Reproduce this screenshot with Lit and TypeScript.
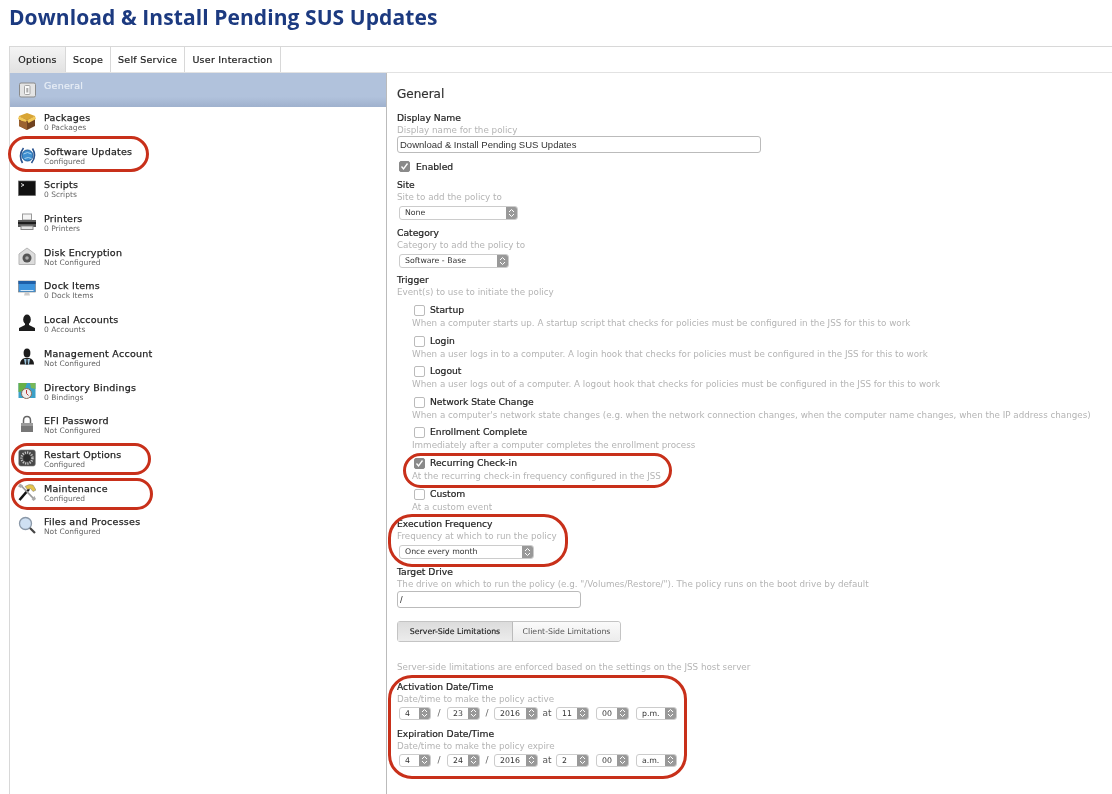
import {LitElement, css, html, svg} from 'lit';
import {customElement} from 'lit/decorators.js';
import {classMap} from 'lit/directives/class-map.js';

const Icons = {
  general: svg`<rect x="1.500" y="3" width="16" height="14" rx="1.500" fill="#e4e4e4" stroke="#8b8b8b"/><rect x="6.500" y="5.500" width="5.500" height="9" rx="1" fill="#fafafa" stroke="#a5a5a5"/><rect x="8.300" y="8" width="2" height="4.500" fill="#aaa"/>`,
  packages: svg`<path d="M9 7 L17 4 V14 L9 18 L1 14 V4Z" fill="#6f4220"/><path d="M1 4 L9 1 L17 4 L9 8Z" fill="#d9a534"/><path d="M1 4 L9 8 L7.500 11 L0 7Z M17 4 L9 8 L10.500 11 L18 7Z" fill="#f2c858"/><path d="M9 10 V18 L1 14 V8.500Z" fill="#9b6230"/>`,
  software: svg`<circle cx="9.500" cy="9.500" r="5.500" fill="#3f8fd0" stroke="#1d5c9a"/><path d="M5.500 8 Q9.500 5 13.500 8 M6.500 12.500 Q10.500 10.500 13.500 12.500" stroke="#a8d4f0" fill="none"/><path d="M5.500 2 Q0 9 4.500 17" fill="none" stroke="#28518c" stroke-width="1.600"/><path d="M13.500 17 Q19 10 14.500 2.500" fill="none" stroke="#28518c" stroke-width="1.600"/>`,
  scripts: svg`<rect x="0.500" y="2" width="17" height="14.500" fill="#111" stroke="#666" stroke-width=".7"/><path d="M3 4.500 L6 6 L3 7.500" fill="none" stroke="#ddd"/>`,
  printers: svg`<rect x="4.500" y="1" width="9" height="6" fill="#f4f4f4" stroke="#999"/><path d="M0 7 H18 V14 H0Z" fill="#5b5b5b"/><rect x="0" y="9" width="18" height="2" fill="#1e1e1e"/><rect x="3" y="13" width="12" height="3.500" fill="#e4e4e4" stroke="#888"/>`,
  disk: svg`<path d="M9 1 L17 7 V17.500 H1 V7Z" fill="#dcdcdc" stroke="#b5b5b5"/><circle cx="9" cy="11" r="4.500" fill="#555"/><circle cx="9" cy="11" r="1.800" fill="#aaa"/>`,
  dock: svg`<rect x="0.500" y="1" width="17" height="11" fill="#3d93dc" stroke="#777" stroke-width=".6"/><rect x="0.500" y="1" width="17" height="3" fill="#1e5fa8"/><rect x="2.500" y="10" width="13" height="1" fill="#d8eaf8"/><path d="M7 12 H11 L12 15.500 H6Z" fill="#ccc"/>`,
  local: svg`<ellipse cx="9" cy="5.500" rx="3.800" ry="5" fill="#1c1c1c"/><path d="M7 9 H11 V11 L17 14 V17 H1 V14 L7 11Z" fill="#1c1c1c"/>`,
  management: svg`<ellipse cx="9" cy="5" rx="3.400" ry="4.500" fill="#1c1c1c"/><path d="M2 16.500 Q2 11 7 10 H11 Q16 11 16 16.500Z" fill="#1c1c1c"/><path d="M6 11 H12 L11 16.500 H7Z" fill="#9cc4dc"/><path d="M8.500 11 H9.500 L10 16.500 H8Z" fill="#1c1c1c"/>`,
  directory: svg`<rect x="0.500" y="1" width="17" height="15" fill="#3ba0c8"/><path d="M0.500 1 H9 L6 9 L0.500 10Z" fill="#68b048"/><path d="M12 1 H17.500 V7 L13 6Z" fill="#78b858"/><circle cx="8.500" cy="11.500" r="5" fill="#eee" stroke="#8a6a58"/><path d="M8.500 8 V11.500 L10.500 13.500" stroke="#b33" fill="none"/>`,
  efi: svg`<path d="M5.500 8 V5.500 Q5.500 1.500 9 1.500 T12.500 5.500 V8" fill="none" stroke="#666" stroke-width="1.500"/><rect x="3" y="8" width="12" height="9" fill="#777"/><rect x="3" y="8" width="12" height="3" fill="#9a9a9a"/>`,
  restart: svg`<rect x="0.800" y="1" width="16.500" height="16" rx="2" fill="#484848" stroke="#777" stroke-width=".6"/><circle cx="9" cy="9" r="5.500" fill="none" stroke="#c4c4c4" stroke-width="2.400" stroke-dasharray="1.200 1.100"/><circle cx="9" cy="9" r="3.500" fill="#2c2c2c"/>`,
  maintenance: svg`<path d="M1.500 17 L11 6" stroke="#111" stroke-width="2.600"/><path d="M7 3.500 Q11 0.500 15 2 L18 7 L15 8.500 L12.500 5.500 L9.500 6.500Z" fill="#e4c44a" stroke="#777" stroke-width=".5"/><path d="M3 2.500 L15 15" stroke="#999" stroke-width="1.800"/><path d="M0 3.500 L2 0.500 L5 2.500 L3 5Z M13.500 16 L16.500 13 L18 16 L15.500 18Z" fill="#aaa"/>`,
  files: svg`<circle cx="7.500" cy="7.500" r="6" fill="#cfe0f2" stroke="#8a98a8" stroke-width="1.300"/><path d="M12 12 L17 17" stroke="#444" stroke-width="2.200"/>`,
};

const SidebarItems = [
  {icon: Icons.packages, title: 'Packages', sub: '0 Packages'},
  {icon: Icons.software, title: 'Software Updates', sub: 'Configured'},
  {icon: Icons.scripts, title: 'Scripts', sub: '0 Scripts'},
  {icon: Icons.printers, title: 'Printers', sub: '0 Printers'},
  {icon: Icons.disk, title: 'Disk Encryption', sub: 'Not Configured'},
  {icon: Icons.dock, title: 'Dock Items', sub: '0 Dock Items'},
  {icon: Icons.local, title: 'Local Accounts', sub: '0 Accounts'},
  {icon: Icons.management, title: 'Management Account', sub: 'Not Configured'},
  {icon: Icons.directory, title: 'Directory Bindings', sub: '0 Bindings'},
  {icon: Icons.efi, title: 'EFI Password', sub: 'Not Configured'},
  {icon: Icons.restart, title: 'Restart Options', sub: 'Configured'},
  {icon: Icons.maintenance, title: 'Maintenance', sub: 'Configured'},
  {icon: Icons.files, title: 'Files and Processes', sub: 'Not Configured'},
];

const Triggers = [
  {label: 'Startup', desc: 'When a computer starts up. A startup script that checks for policies must be configured in the JSS for this to work'},
  {label: 'Login', desc: 'When a user logs in to a computer. A login hook that checks for policies must be configured in the JSS for this to work'},
  {label: 'Logout', desc: 'When a user logs out of a computer. A logout hook that checks for policies must be configured in the JSS for this to work'},
  {label: 'Network State Change', desc: "When a computer's network state changes (e.g. when the network connection changes, when the computer name changes, when the IP address changes)"},
  {label: 'Enrollment Complete', desc: 'Immediately after a computer completes the enrollment process'},
  {label: 'Recurring Check-in', desc: 'At the recurring check-in frequency configured in the JSS', checked: true},
  {label: 'Custom', desc: 'At a custom event'},
];

const Tabs = [
  {label: 'Options', width: 56},
  {label: 'Scope', width: 45},
  {label: 'Self Service', width: 74},
  {label: 'User Interaction', width: 96},
];

// red annotations drawn on top of the screenshot
const Ovals = [
  {x: 8, y: 136, w: 141, h: 36},
  {x: 11, y: 443, w: 140, h: 32},
  {x: 11, y: 478, w: 142, h: 32},
  {x: 403, y: 453, w: 269, h: 35},
  {x: 388, y: 514, w: 180, h: 53},
  {x: 388, y: 675, w: 299, h: 104},
];

const select = (value: string, width: number) =>
  html`<div class="select" style="width:${width}px">
    <span>${value}</span>
    <i class="stepper">
      <svg width="7" height="10" viewBox="0 0 7 10">
        <path d="M1 4 L3.500 1.500 L6 4 M1 6 L3.500 8.500 L6 6" fill="none" stroke="#fff" stroke-width="1"/>
      </svg>
    </i>
  </div>`;

const checkbox = (checked = false) =>
  html`<i class=${classMap({check: true, on: checked})}>
    ${checked
      ? html`<svg width="11" height="11" viewBox="0 0 11 11">
          <path d="M2.500 5.500 L4.500 8 L8.500 2.500" fill="none" stroke="#fff" stroke-width="1.300"/>
        </svg>`
      : ''}
  </i>`;

const dateRow = (month: string, day: string, hour: string, ampm: string) =>
  html`<div class="date-row">
    ${select(month, 32)}<span class="sep">/</span>${select(day, 33)}<span class="sep short">/</span>
    ${select('2016', 44)}<span class="at">at</span>${select(hour, 33)}
    <span class="gap"></span>${select('00', 33)}<span class="gap"></span>${select(ampm, 41)}
  </div>`;

@customElement('app-root')
export class AppRoot extends LitElement {
  static styles = css`
    :host {
      display: block;
      position: relative;
      width: 1112px;
      height: 794px;
      overflow: hidden;
      background: #fff;
      font-family: 'DejaVu Sans', sans-serif;
      font-size: 9px;
      color: #222;
      filter: blur(0.3px);
    }

    h1 {
      margin: 0;
      padding: 4px 0 0 9px;
      height: 46px;
      box-sizing: border-box;
      font-family: 'Open Sans', sans-serif;
      font-size: 21px;
      line-height: 26px;
      font-weight: bold;
      letter-spacing: 0.08px;
      color: #1c3a80;
      white-space: nowrap;
    }

    .tabs {
      display: flex;
      margin-left: 9px;
      height: 27px;
      box-sizing: border-box;
      border-top: 1px solid #d8d8d8;
      border-left: 1px solid #d8d8d8;
      border-bottom: 1px solid #e2e2e2;
    }

    .tabs div {
      display: flex;
      align-items: center;
      justify-content: center;
      box-sizing: border-box;
      border-right: 1px solid #d8d8d8;
      font-size: 9.500px;
      letter-spacing: 0.25px;
      white-space: nowrap;
      -webkit-text-stroke: 0.2px #222;
    }

    .tabs div.active {
      background: linear-gradient(#f4f4f4, #e2e2e2);
    }

    .body {
      display: flex;
      margin-left: 9px;
      height: 721px;
    }

    .sidebar {
      width: 376px;
      flex: none;
      border-left: 1px solid #d8d8d8;
      border-right: 1px solid #bbb;
    }

    .row {
      display: flex;
      height: 33.700px;
      box-sizing: border-box;
      padding: 4px 0 0 8px;
      gap: 8px;
    }

    .row svg {
      width: 18px;
      height: 18px;
      flex: none;
      margin-top: 1px;
    }

    .row.selected {
      height: 34px;
      padding-top: 6px;
      background: linear-gradient(#b1c2dc 70%, #9fb1cd);
    }

    .row.selected b {
      color: #e8eef6;
      -webkit-text-stroke: 0.2px #e8eef6;
    }

    .row b {
      display: block;
      font-weight: normal;
      font-size: 9.500px;
      line-height: 11px;
      margin-top: 1px;
      letter-spacing: 0.25px;
      -webkit-text-stroke: 0.25px #222;
    }

    .row small {
      display: block;
      font-size: 7.500px;
      line-height: 10px;
      color: #666;
    }

    .content {
      flex: 1;
      padding: 14px 0 0 10px;
      min-width: 0;
    }

    h2 {
      margin: 0 0 10px;
      font-size: 12px;
      line-height: 15px;
      font-weight: normal;
      color: #333;
      -webkit-text-stroke: 0.2px #333;
    }

    .label {
      font-size: 9.200px;
      line-height: 12px;
      -webkit-text-stroke: 0.2px #222;
      white-space: nowrap;
    }

    .desc {
      font-size: 8.750px;
      line-height: 12px;
      color: #b4b4b4;
      white-space: nowrap;
    }

    .input {
      display: flex;
      align-items: center;
      box-sizing: border-box;
      height: 17px;
      padding-left: 2px;
      border: 1px solid #bbb;
      border-radius: 3px;
      font-family: 'Liberation Sans', sans-serif;
      font-size: 9.500px;
      color: #333;
    }

    .select {
      display: flex;
      justify-content: space-between;
      align-items: stretch;
      box-sizing: border-box;
      height: 14px;
      flex: none;
      border: 1px solid #ccc;
      border-radius: 3px;
      font-size: 7.800px;
      line-height: 12px;
      color: #333;
    }

    .select span {
      padding-left: 5px;
    }

    .stepper {
      display: flex;
      align-items: center;
      justify-content: center;
      width: 11px;
      background: #999;
      border-radius: 0 2px 2px 0;
    }

    .check {
      display: block;
      box-sizing: border-box;
      width: 11px;
      height: 11px;
      flex: none;
      border: 1px solid #bbb;
      border-radius: 2px;
      background: #fff;
    }

    .check svg {
      display: block;
      margin: -1px;
    }

    .check.on {
      background: #8a8a8a;
      border-color: #8a8a8a;
    }

    .enabled {
      display: flex;
      align-items: center;
      gap: 6px;
      padding-left: 2px;
      height: 13px;
      margin: 7px 0 6px;
    }

    .block-select {
      padding: 3px 0 6.500px 2px;
    }

    .block-select.last {
      padding-bottom: 7px;
    }

    .trigger {
      padding-left: 15px;
      height: 30.600px;
      box-sizing: border-box;
    }

    .trigger-head {
      display: flex;
      gap: 5px;
      padding-left: 2px;
      height: 13px;
    }

    .trigger-head .check {
      margin-top: 1px;
    }

    .triggers {
      padding-top: 6px;
      height: 219.500px;
      box-sizing: border-box;
    }

    .seg {
      display: inline-flex;
      height: 21px;
      margin: 13px 0 19px;
      box-sizing: border-box;
      border: 1px solid #c4c4c4;
      border-radius: 3px;
      font-size: 7.800px;
      line-height: 19px;
      color: #555;
      white-space: nowrap;
    }

    .seg .active {
      width: 115px;
      box-sizing: border-box;
      background: linear-gradient(#dcdcdc, #ececec);
      border-right: 1px solid #bbb;
      text-align: center;
      color: #222;
      -webkit-text-stroke: 0.15px #222;
    }

    .seg div:last-child {
      width: 107px;
      box-sizing: border-box;
      text-align: center;
      background: linear-gradient(#fafafa, #ececec);
      border-radius: 0 3px 3px 0;
    }

    .note {
      margin-bottom: 8px;
    }

    .date-row {
      display: flex;
      align-items: center;
      padding: 2px 0 8px 2px;
    }

    .date-row .select {
      height: 13px;
      line-height: 11px;
    }

    .sep {
      width: 16px;
      text-align: center;
      color: #666;
    }

    .sep.short {
      width: 14px;
    }

    .at {
      width: 18px;
      text-align: center;
      color: #555;
    }

    .gap {
      width: 7px;
    }

    .oval {
      position: absolute;
      box-sizing: border-box;
      border: 3px solid #c8301a;
      border-radius: 24px;
    }
  `;

  renderSidebar() {
    return html`<div class="sidebar">
      <div class="row selected">
        <svg viewBox="0 0 18 18">${Icons.general}</svg>
        <div><b>General</b></div>
      </div>
      ${SidebarItems.map(
        (item) => html`<div class="row">
          <svg viewBox="0 0 18 18">${item.icon}</svg>
          <div><b>${item.title}</b><small>${item.sub}</small></div>
        </div>`
      )}
    </div>`;
  }

  renderContent() {
    return html`<div class="content">
      <h2>General</h2>
      <div class="label">Display Name</div>
      <div class="desc">Display name for the policy</div>
      <div class="input" style="width:364px">Download &amp; Install Pending SUS Updates</div>
      <div class="enabled">${checkbox(true)}<span class="label">Enabled</span></div>

      <div class="label">Site</div>
      <div class="desc">Site to add the policy to</div>
      <div class="block-select">${select('None', 119)}</div>

      <div class="label">Category</div>
      <div class="desc">Category to add the policy to</div>
      <div class="block-select">${select('Software - Base', 110)}</div>

      <div class="label">Trigger</div>
      <div class="desc">Event(s) to use to initiate the policy</div>
      <div class="triggers">
        ${Triggers.map(
          (t) => html`<div class="trigger">
            <div class="trigger-head">${checkbox(t.checked)}<span class="label">${t.label}</span></div>
            <div class="desc">${t.desc}</div>
          </div>`
        )}
      </div>

      <div class="label">Execution Frequency</div>
      <div class="desc">Frequency at which to run the policy</div>
      <div class="block-select last">${select('Once every month', 135)}</div>

      <div class="label">Target Drive</div>
      <div class="desc">The drive on which to run the policy (e.g. "/Volumes/Restore/"). The policy runs on the boot drive by default</div>
      <div class="input" style="width:184px;margin-top:1px">/</div>

      <div class="seg">
        <div class="active">Server-Side Limitations</div>
        <div>Client-Side Limitations</div>
      </div>
      <div class="desc note">Server-side limitations are enforced based on the settings on the JSS host server</div>

      <div class="label">Activation Date/Time</div>
      <div class="desc">Date/time to make the policy active</div>
      ${dateRow('4', '23', '11', 'p.m.')}
      <div class="label">Expiration Date/Time</div>
      <div class="desc">Date/time to make the policy expire</div>
      ${dateRow('4', '24', '2', 'a.m.')}
    </div>`;
  }

  render() {
    return html`
      <h1>Download &amp; Install Pending SUS Updates</h1>
      <div class="tabs">
        ${Tabs.map(
          (t, i) => html`<div class=${classMap({active: i === 0})} style="width:${t.width}px">${t.label}</div>`
        )}
      </div>
      <div class="body">${this.renderSidebar()} ${this.renderContent()}</div>
      ${Ovals.map(
        (o) => html`<div class="oval" style="left:${o.x}px;top:${o.y}px;width:${o.w}px;height:${o.h}px"></div>`
      )}
    `;
  }
}
